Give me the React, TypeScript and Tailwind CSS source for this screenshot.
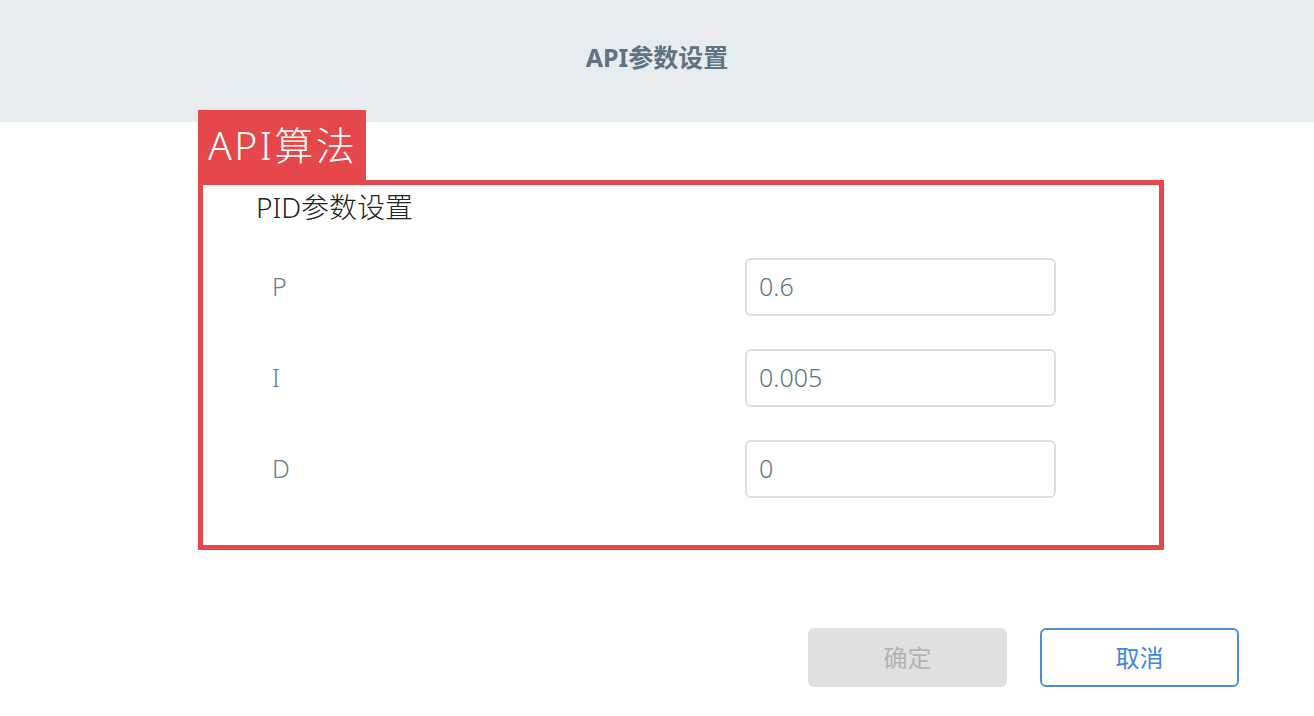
import React from "react";

const font = `font-['Noto_Sans','Noto_Sans_CJK_SC',sans-serif]`;

const params = [
  { name: "P", value: "0.6" },
  { name: "I", value: "0.005" },
  { name: "D", value: "0" },
];

const App = () => {
  return (
    <div className={`${font} w-[1314px] h-[716px] bg-white overflow-hidden`}>
      {/* Dialog header */}
      <div className="h-[122px] bg-[#e8ecef] flex items-center justify-center">
        <p className="text-[#5f7382] font-bold text-[25px] leading-none -mt-[8px]">
          API参数设置
        </p>
      </div>

      {/* Algorithm group */}
      <div className="ml-[198px] w-[966px] -mt-[12px]">
        <div className="w-[168px] h-[70px] bg-[#e5474a] flex items-center pl-[10px]">
          <span className="text-white font-light text-[39px] leading-none tracking-[2.5px] -mt-[2px]">
            API算法
          </span>
        </div>
        <div className="h-[370px] border-[5px] border-[#e5474a] pl-[53px] pt-[6px]">
          <p className="text-[#222] font-light text-[28px] leading-[32px]">PID参数设置</p>
          <div className="flex flex-col gap-[33px] mt-[35px]">
            {params.map((p) => (
              <div key={p.name} className="grid grid-cols-[489px_311px] items-center">
                <span className="pl-[16px] text-[#6a7d8a] font-light text-[25px]">{p.name}</span>
                <div className="h-[58px] border-2 border-[#dedede] rounded-[6px] flex items-center pl-[12px]">
                  <span className="text-[#607480] font-light text-[25px]">{p.value}</span>
                </div>
              </div>
            ))}
          </div>
        </div>
      </div>

      {/* Footer buttons */}
      <div className="flex justify-end gap-[33px] pr-[75px] mt-[78px]">
        <button className="w-[199px] h-[59px] rounded-[6px] bg-[#e0e0e0] text-[#b3b3b3] text-[24px]">
          确定
        </button>
        <button className="w-[199px] h-[59px] rounded-[6px] border-2 border-[#4a90e2] bg-white text-[#3f87de] text-[24px]">
          取消
        </button>
      </div>
    </div>
  );
};

export default App;
